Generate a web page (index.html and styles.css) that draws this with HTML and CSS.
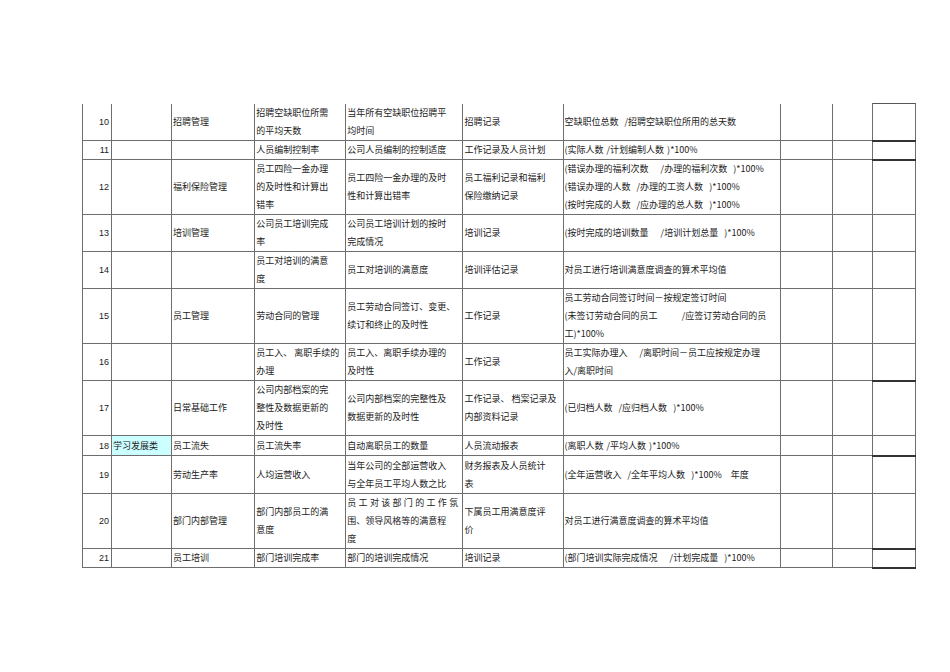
FILE: index.html
```html
<!DOCTYPE html>
<html lang="zh">
<head>
<meta charset="utf-8">
<title>人力资源考核指标</title>
<link rel="stylesheet" href="styles.css">
</head>
<body>
<table class="kpi">
  <colgroup>
    <col class="c1"><col class="c2"><col class="c3"><col class="c4"><col class="c5">
    <col class="c6"><col class="c7"><col class="c8"><col class="c9"><col class="c10">
  </colgroup>
  <tbody>
    <tr class="h37 first">
      <td class="num">10</td><td></td><td>招聘管理</td>
      <td>招聘空缺职位所需<br>的平均天数</td>
      <td>当年所有空缺职位招聘平<br>均时间</td>
      <td>招聘记录</td>
      <td class="f">空缺职位总数  /招聘空缺职位所用的总天数</td>
      <td></td><td class="gap"></td><td class="box boxtop"></td>
    </tr>
    <tr class="h19">
      <td class="num">11</td><td></td><td></td>
      <td>人员编制控制率</td>
      <td>公司人员编制的控制适度</td>
      <td>工作记录及人员计划</td>
      <td class="f">(实际人数 /计划编制人数 )*100%</td>
      <td></td><td class="gap"></td><td class="box dark"></td>
    </tr>
    <tr class="h55">
      <td class="num">12</td><td></td><td>福利保险管理</td>
      <td>员工四险一金办理<br>的及时性和计算出<br>错率</td>
      <td>员工四险一金办理的及时<br>性和计算出错率</td>
      <td>员工福利记录和福利<br>保险缴纳记录</td>
      <td class="f">(错误办理的福利次数    /办理的福利次数  )*100%<br>(错误办理的人数  /办理的工资人数  )*100%<br>(按时完成的人数  /应办理的总人数  )*100%</td>
      <td></td><td class="gap"></td><td class="box dark"></td>
    </tr>
    <tr class="h37">
      <td class="num">13</td><td></td><td>培训管理</td>
      <td>公司员工培训完成<br>率</td>
      <td>公司员工培训计划的按时<br>完成情况</td>
      <td>培训记录</td>
      <td class="f">(按时完成的培训数量    /培训计划总量  )*100%</td>
      <td></td><td class="gap"></td><td class="box"></td>
    </tr>
    <tr class="h37">
      <td class="num">14</td><td></td><td></td>
      <td>员工对培训的满意<br>度</td>
      <td>员工对培训的满意度</td>
      <td>培训评估记录</td>
      <td class="f">对员工进行培训满意度调查的算术平均值</td>
      <td></td><td class="gap"></td><td class="box"></td>
    </tr>
    <tr class="h54">
      <td class="num">15</td><td></td><td>员工管理</td>
      <td>劳动合同的管理</td>
      <td>员工劳动合同签订、变更、<br>续订和终止的及时性</td>
      <td>工作记录</td>
      <td class="f">员工劳动合同签订时间－按规定签订时间<br>(未签订劳动合同的员工        /应签订劳动合同的员<br>工)*100%</td>
      <td></td><td class="gap"></td><td class="box"></td>
    </tr>
    <tr class="h37">
      <td class="num">16</td><td></td><td></td>
      <td>员工入、 离职手续的<br>办理</td>
      <td>员工入、离职手续办理的<br>及时性</td>
      <td>工作记录</td>
      <td class="f">员工实际办理入    /离职时间－员工应按规定办理<br>入/离职时间</td>
      <td></td><td class="gap"></td><td class="box"></td>
    </tr>
    <tr class="h55">
      <td class="num">17</td><td></td><td>日常基础工作</td>
      <td>公司内部档案的完<br>整性及数据更新的<br>及时性</td>
      <td>公司内部档案的完整性及<br>数据更新的及时性</td>
      <td>工作记录、 档案记录及<br>内部资料记录</td>
      <td class="f">(已归档人数  /应归档人数  )*100%</td>
      <td></td><td class="gap"></td><td class="box dark"></td>
    </tr>
    <tr class="h20">
      <td class="num">18</td><td class="hl">学习发展类</td><td>员工流失</td>
      <td>员工流失率</td>
      <td>自动离职员工的数量</td>
      <td>人员流动报表</td>
      <td class="f">(离职人数 /平均人数 )*100%</td>
      <td></td><td class="gap"></td><td class="box"></td>
    </tr>
    <tr class="h38">
      <td class="num">19</td><td></td><td>劳动生产率</td>
      <td>人均运营收入</td>
      <td>当年公司的全部运营收入<br>与全年员工平均人数之比</td>
      <td>财务报表及人员统计<br>表</td>
      <td class="f">(全年运营收入  /全年平均人数  )*100%   年度</td>
      <td></td><td class="gap"></td><td class="box dark"></td>
    </tr>
    <tr class="h54">
      <td class="num">20</td><td></td><td>部门内部管理</td>
      <td>部门内部员工的满<br>意度</td>
      <td class="spread">员 工 对 该 部 门 的 工 作 氛<br>围、领导风格等的满意程<br>度</td>
      <td>下属员工用满意度评<br>价</td>
      <td class="f">对员工进行满意度调查的算术平均值</td>
      <td></td><td class="gap"></td><td class="box"></td>
    </tr>
    <tr class="h19 last">
      <td class="num">21</td><td></td><td>员工培训</td>
      <td>部门培训完成率</td>
      <td>部门的培训完成情况</td>
      <td>培训记录</td>
      <td class="f">(部门培训实际完成情况    /计划完成量  )*100%</td>
      <td></td><td class="gap"></td><td class="box dark bottom"></td>
    </tr>
  </tbody>
</table>
</body>
</html>
```

FILE: styles.css
```css
html, body {
  margin: 0;
  padding: 0;
  background: #ffffff;
}

body {
  padding: 103px 0 0 82px;
  font-family: "Noto Sans CJK SC", "Liberation Sans", sans-serif;
  font-size: 9px;
  color: #222;
}

.kpi {
  border-collapse: collapse;
  table-layout: fixed;
  width: 834px;
}

.c1 { width: 29px; }
.c2 { width: 60px; }
.c3 { width: 83px; }
.c4 { width: 91px; }
.c5 { width: 117px; }
.c6 { width: 100px; }
.c7 { width: 217px; }
.c8 { width: 52px; }
.c9 { width: 40px; }
.c10 { width: 43px; }

.kpi td {
  border: 1px solid #6e6e6e;
  padding: 0 1px;
  line-height: 18px;
  vertical-align: middle;
  white-space: nowrap;
  overflow: hidden;
}

.kpi tr.first td {
  border-top: none;
}

.kpi tr.first td.boxtop {
  border-top: 1px solid #555;
}

.h19 { height: 19px; }
.h20 { height: 20px; }
.h37 { height: 37px; }
.h38 { height: 38px; }
.h54 { height: 54px; }
.h55 { height: 55px; }

.kpi td.num {
  text-align: right;
  font-family: "Liberation Sans", Arial, sans-serif;
  font-size: 9px;
  padding-right: 2px;
}

.kpi td.f {
  white-space: pre;
  word-spacing: 1px;
}

.kpi td.hl {
  background: #ccffff;
}

.kpi td.spread {
  word-spacing: 0.3px;
}

.kpi td.box.dark {
  border-top: 2px solid #333;
}

.kpi td.box.bottom {
  border-bottom: 2px solid #333;
}
```
